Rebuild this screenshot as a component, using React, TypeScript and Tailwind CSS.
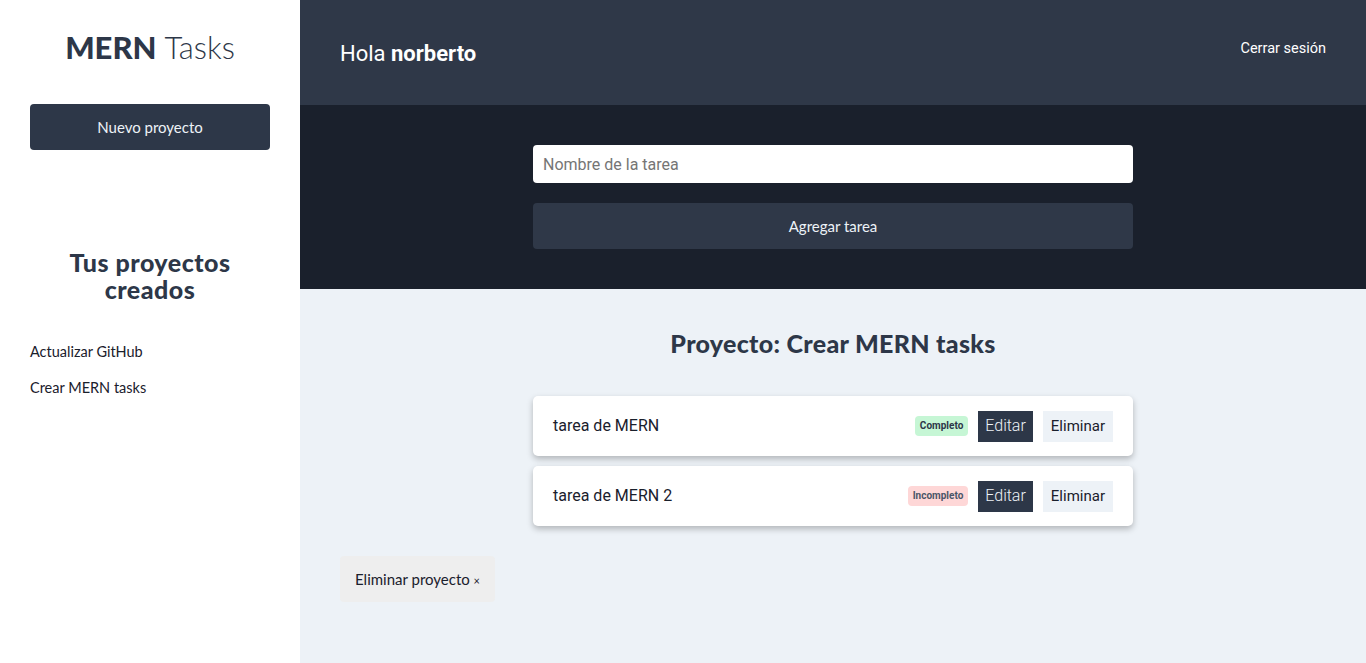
import React from 'react';

const RALEWAY = "font-['Lato','Open_Sans',sans-serif]";
const ROBOTO = "font-['Roboto','Liberation_Sans',sans-serif]";

interface Task {
  name: string;
  done: boolean;
}

const projects = ['Actualizar GitHub', 'Crear MERN tasks'];

const tasks: Task[] = [
  { name: 'tarea de MERN', done: true },
  { name: 'tarea de MERN 2', done: false },
];

const Sidebar: React.FC = () => (
  <aside className={`w-[300px] shrink-0 bg-white px-[30px] ${RALEWAY}`}>
    <h1 className="pt-[27px] text-center text-[31px] leading-[40px] text-[#2d3748]">
      <span className="font-black">MERN</span> <span className="font-light">Tasks</span>
    </h1>
    <button className="mt-[37px] h-[46px] w-full rounded-[4px] bg-[#2d3748] text-[15px] text-[#edf2f7]">
      Nuevo proyecto
    </button>
    <h2 className="mt-[99px] text-center text-[25px] font-black leading-[27px] tracking-[0.5px] text-[#2d3748]">
      Tus proyectos
      <br />
      creados
    </h2>
    {/* Listado de proyectos */}
    <ul className="mt-[39px] flex flex-col gap-[16px]">
      {projects.map((p) => (
        <li key={p} className="text-[14.5px] leading-[20px] text-[#1a202c]">
          {p}
        </li>
      ))}
    </ul>
  </aside>
);

const TaskItem: React.FC<{ task: Task }> = ({ task }) => (
  <li className="flex h-[60px] items-center justify-between rounded-[5px] bg-white px-[20px] shadow-[0_3px_6px_rgba(0,0,0,0.25)]">
    <span className={`text-[16px] text-[#1a202c] ${ROBOTO}`}>{task.name}</span>
    <div className={`flex items-center gap-[10px] ${ROBOTO}`}>
      {task.done ? (
        <span className="rounded-[4px] bg-[#c6f6d5] px-[5px] py-[3px] text-[10px] font-bold leading-[14px] text-[#2d3748]">
          Completo
        </span>
      ) : (
        <span className="rounded-[4px] bg-[#fed7d7] px-[5px] py-[3px] text-[10px] font-bold leading-[14px] text-[#4a5568]">
          Incompleto
        </span>
      )}
      <button className="h-[31px] bg-[#2d3748] px-[7px] text-[16px] font-light text-[#edf2f7]">
        Editar
      </button>
      <button className="h-[31px] bg-[#edf2f7] px-[8px] text-[15px] text-[#1a202c]">
        Eliminar
      </button>
    </div>
  </li>
);

export default function App() {
  return (
    <div className="flex h-[663px] w-full overflow-hidden">
      <Sidebar />
      <div className="flex flex-1 flex-col bg-[#edf2f7]">
        {/* Barra superior */}
        <header className="flex h-[105px] items-start justify-between bg-[#2f3848] px-[40px]">
          <p className={`mt-[37px] text-[22px] text-white ${ROBOTO}`}>
            Hola <span className="font-bold">norberto</span>
          </p>
          <button className={`mt-[38px] text-[14.5px] text-white ${ROBOTO}`}>Cerrar sesión</button>
        </header>

        {/* Formulario de tareas */}
        <section className="flex h-[184px] flex-col items-center bg-[#1a202c] pt-[40px]">
          <input
            className={`h-[38px] w-[600px] rounded-[4px] bg-white px-[10px] text-[16px] outline-none placeholder:text-[#757575] ${ROBOTO}`}
            placeholder="Nombre de la tarea"
          />
          <button className={`mt-[20px] h-[46px] w-[600px] rounded-[4px] bg-[#2f3848] text-[15px] text-[#edf2f7] ${RALEWAY}`}>
            Agregar tarea
          </button>
        </section>

        <main className="flex-1 px-[40px]">
          <h2 className={`mt-[39px] text-center text-[25px] font-black leading-[30px] tracking-[0.3px] text-[#2d3748] ${RALEWAY}`}>
            Proyecto: Crear MERN tasks
          </h2>
          <ul className="mx-auto mt-[38px] flex w-[600px] flex-col gap-[10px]">
            {tasks.map((t) => (
              <TaskItem key={t.name} task={t} />
            ))}
          </ul>
          <button className={`mt-[30px] h-[46px] rounded-[4px] bg-[#eeeeee] px-[15px] text-[15px] text-[#1a202c] ${RALEWAY}`}>
            Eliminar proyecto <span className="text-[11px]">×</span>
          </button>
        </main>
      </div>
    </div>
  );
}
